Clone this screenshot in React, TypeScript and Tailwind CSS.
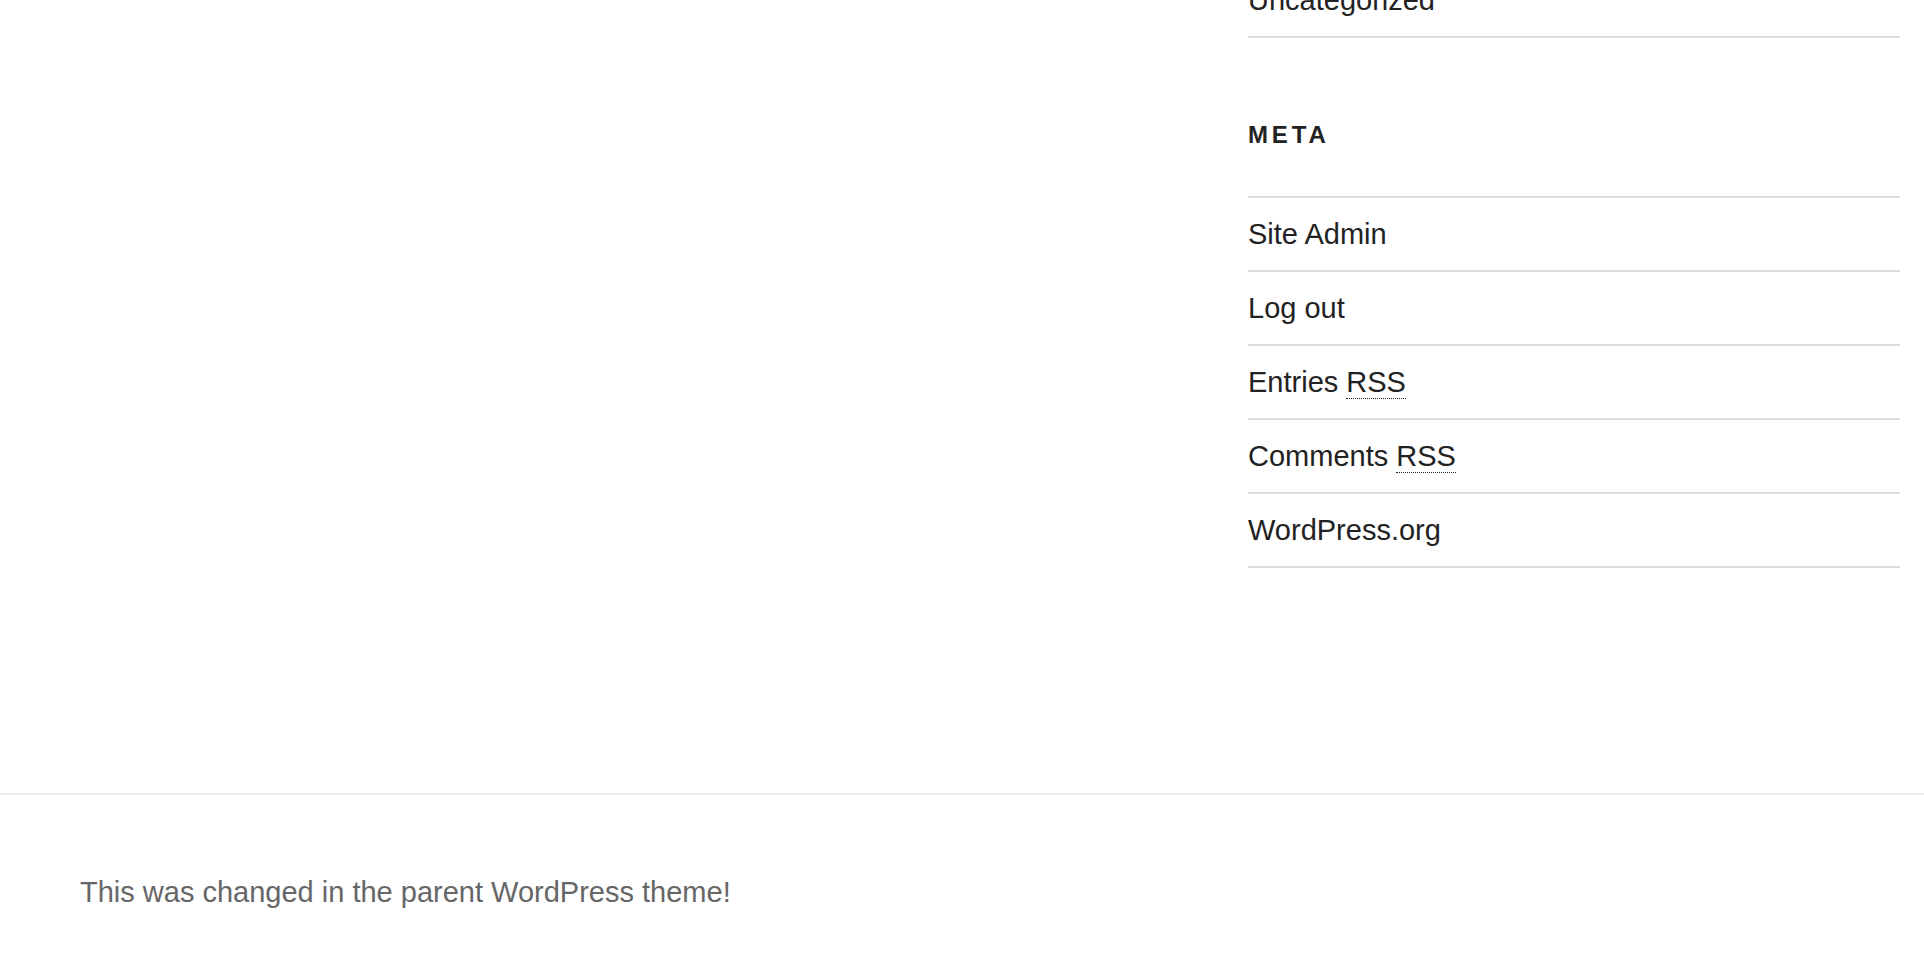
export default function App() {
    const links: { label: string; abbr?: string }[] = [
        { label: "Site Admin" },
        { label: "Log out" },
        { label: "Entries", abbr: "RSS" },
        { label: "Comments", abbr: "RSS" },
        { label: "WordPress.org" },
    ]

    return (
        <div className="min-h-screen overflow-hidden bg-white font-['Liberation_Sans',Arial,sans-serif] text-[#222]">
            <div className="flex">
                <main className="flex-1" />

                <aside className="w-[652px] mr-[24px] -mt-[36px]">
                    {/* tail of the categories widget */}
                    <ul>
                        <li className="py-[14px] text-[29px] leading-[44px] border-b-2 border-[#ddd]">Uncategorized</li>
                    </ul>

                    <section className="mt-[82px]">
                        <h2 className="text-[24px] leading-[30px] font-black uppercase tracking-[0.16em] text-[#222]">
                            Meta
                        </h2>
                        <ul className="mt-[46px] border-t-2 border-[#ddd]">
                            {links.map((l) => (
                                <li key={l.label} className="py-[14px] text-[29px] leading-[44px] border-b-2 border-[#ddd]">
                                    {l.label}
                                    {l.abbr && (
                                        <>
                                            {" "}
                                            <abbr title="Really Simple Syndication" className="no-underline border-b border-dotted border-[#222]">
                                                {l.abbr}
                                            </abbr>
                                        </>
                                    )}
                                </li>
                            ))}
                        </ul>
                    </section>
                </aside>
            </div>

            <footer className="mt-[225px] border-t-2 border-[#eee]">
                <p className="pl-[80px] pt-[75px] pb-[54px] text-[29px] leading-[44px] text-[#666]">
                    This was changed in the parent WordPress theme!
                </p>
            </footer>
        </div>
    )
}
